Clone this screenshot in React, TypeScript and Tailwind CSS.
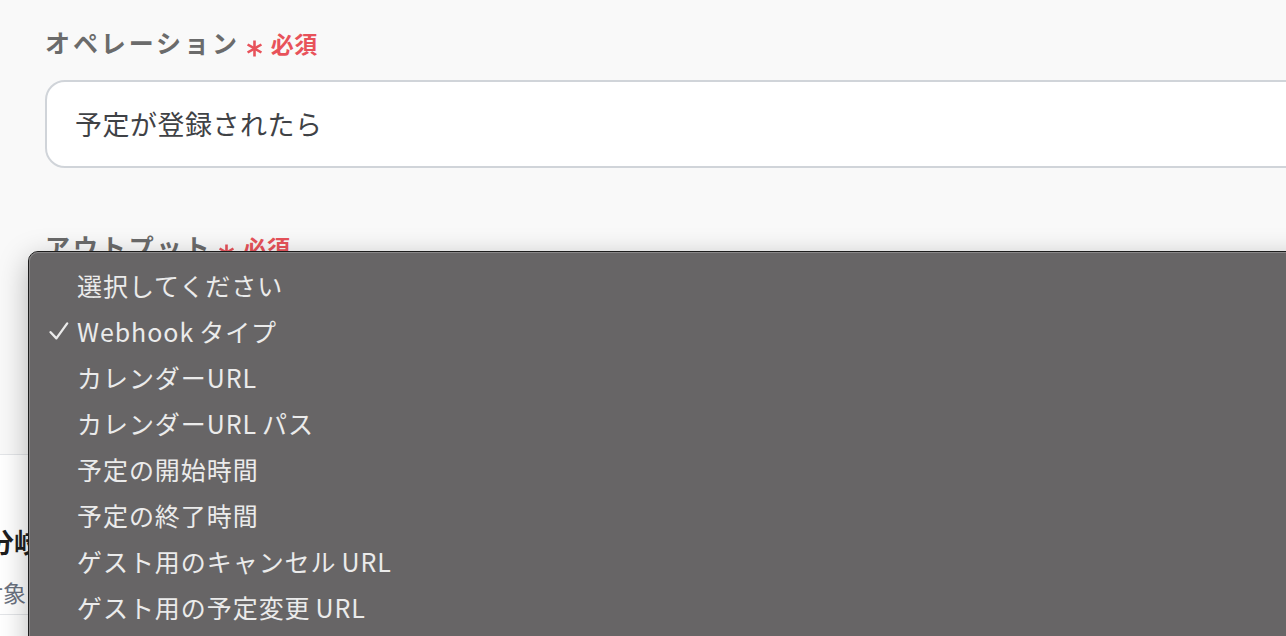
import React from "react";

type Seg = { t: string; gapL?: boolean };
const items: Seg[][] = [
  [{ t: "選択してください" }],
  [{ t: "Webhook" }, { t: "タイプ", gapL: true }],
  [{ t: "カレンダーURL" }],
  [{ t: "カレンダーURL" }, { t: "パス", gapL: true }],
  [{ t: "予定の開始時間" }],
  [{ t: "予定の終了時間" }],
  [{ t: "ゲスト用のキャンセル" }, { t: "URL", gapL: true }],
  [{ t: "ゲスト用の予定変更" }, { t: "URL", gapL: true }],
];

function Asterisk() {
  return (
    <svg width="17" height="17" viewBox="0 0 17 17" className="mt-[10px]">
      <g stroke="#e8525a" strokeWidth="2.6" strokeLinecap="butt">
        <line x1="8.5" y1="0.5" x2="8.5" y2="16.5" />
        <line x1="1.6" y1="4.5" x2="15.4" y2="12.5" />
        <line x1="1.6" y1="12.5" x2="15.4" y2="4.5" />
      </g>
    </svg>
  );
}

function Label({ text }: { text: string }) {
  return (
    <div className="flex items-center h-[36px]">
      <span className="text-[25px] font-bold text-[#6b6b6b] tracking-[2.9px]">{text}</span>
      <span className="ml-[6px] flex items-center">
        <Asterisk />
      </span>
      <span className="ml-[8px] text-[23px] font-bold text-[#e8525a] tracking-[0.5px]">必須</span>
    </div>
  );
}

function Check() {
  return (
    <svg width="20" height="20" viewBox="0 0 20 20" className="block">
      <path d="M1.6 11.2 L7.4 17.4 L18.2 2.4" fill="none" stroke="#ebebeb" strokeWidth="2.3" strokeLinecap="round" strokeLinejoin="round" />
    </svg>
  );
}

export default function App() {
  return (
    <div className="relative w-[1286px] h-[636px] overflow-hidden bg-[#f9f9f9] font-['Noto_Sans_CJK_JP',sans-serif]">
      <div className="pl-[45px] pt-[25px]">
        <Label text="オペレーション" />
        <div className="mt-[19px] w-[1300px] h-[88px] rounded-[20px] border-2 border-[#d0d4d9] bg-white flex items-center pl-[28px]">
          <span className="text-[27px] text-[#3f4246] tracking-[0.5px]">予定が登録されたら</span>
        </div>
        <div className="mt-[61px]">
          <Label text="アウトプット" />
        </div>
        <div className="mt-[19px] w-[1300px] h-[88px] rounded-[20px] border-2 border-[#d0d4d9] bg-white" />
      </div>
      <div className="absolute left-0 right-0 top-[454px] bottom-0 bg-white border-t border-[#e3e5e8]">
        <div className="-ml-[13px] mt-[67px] text-[27px] font-bold text-[#1f1f1f] leading-[40px]">分岐</div>
        <div className="-ml-[20px] mt-[14px] text-[23px] text-[#6b7280] leading-[32px]">対象</div>
        <div className="mt-[6px] border-t border-[#e3e5e8]" />
      </div>
      <div className="absolute left-[28px] top-[251px] w-[1300px] h-[420px] rounded-[10px] border border-[#1d1d1d] bg-[#676566] shadow-[0_8px_30px_rgba(0,0,0,0.28)]">
        <div className="h-full rounded-[9px] border-t border-l border-[#8a8889] pt-[9px]">
          {items.map((segs, i) => (
            <div key={i} className="flex items-center h-[46px] pl-[19px] text-[#ebebeb]">
              <span className="w-[28px] flex items-center">{i === 1 ? <Check /> : null}</span>
              <span className="text-[25px] leading-[46px] tracking-[0.95px] whitespace-nowrap">
                {segs.map((s, j) => (
                  <span key={j} className={s.gapL ? "ml-[5px]" : ""}>{s.t}</span>
                ))}
              </span>
            </div>
          ))}
        </div>
      </div>
    </div>
  );
}
